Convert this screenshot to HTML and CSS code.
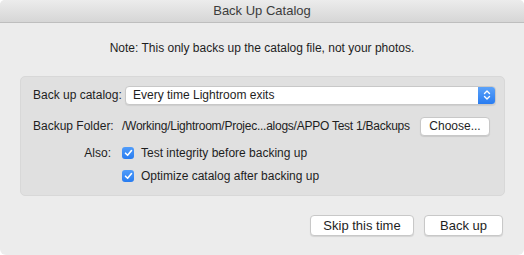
FILE: index.html
```html
<!DOCTYPE html>
<html>
<head>
  <title>Back Up Catalog</title>
  <link rel="stylesheet" href="styles.css">
</head>
<body>

  <div class="window">
    <div class="title-bar">Back Up Catalog</div>

    <p class="note">Note: This only backs up the catalog file, not your photos.</p>

    <div class="group">
      <div class="row row-catalog">
        <span class="label">Back up catalog:</span>
        <div class="popup">
          <span>Every time Lightroom exits</span>
          <span class="stepper">
            <svg width="8" height="12" viewBox="0 0 8 12">
              <path d="M1.5 4.5 L4 2 L6.5 4.5 M1.5 7.5 L4 10 L6.5 7.5" fill="none" stroke="white" stroke-width="1.4" stroke-linecap="round" stroke-linejoin="round"/>
            </svg>
          </span>
        </div>
      </div>

      <div class="row row-folder">
        <span class="label">Backup Folder:</span>
        <span class="path">/Working/Lightroom/Projec...alogs/APPO Test 1/Backups</span>
        <button class="button choose-button">Choose...</button>
      </div>

      <div class="row row-check">
        <span class="label label-right">Also:</span>
        <span class="checkbox">
          <svg width="9" height="8" viewBox="0 0 9 8">
            <path d="M1.5 4.2 L3.6 6.3 L7.5 1.5" fill="none" stroke="white" stroke-width="1.6" stroke-linecap="round" stroke-linejoin="round"/>
          </svg>
        </span>
        <span>Test integrity before backing up</span>
      </div>

      <div class="row row-check">
        <span class="label label-right"></span>
        <span class="checkbox">
          <svg width="9" height="8" viewBox="0 0 9 8">
            <path d="M1.5 4.2 L3.6 6.3 L7.5 1.5" fill="none" stroke="white" stroke-width="1.6" stroke-linecap="round" stroke-linejoin="round"/>
          </svg>
        </span>
        <span>Optimize catalog after backing up</span>
      </div>
    </div>

    <div class="actions">
      <button class="button skip-button">Skip this time</button>
      <button class="button backup-button">Back up</button>
    </div>
  </div>

</body>
</html>
```

FILE: styles.css
```css
body {
  margin: 0;
  background-color: white;
  font-family: "Liberation Sans", Arial, sans-serif;
  font-size: 12px;
  color: rgb(30, 30, 30);
}

.window {
  width: 524px;
  height: 255px;
  background-color: rgb(236, 236, 236);
  border-radius: 5px 5px 6px 6px;
  overflow: hidden;
  display: flex;
  flex-direction: column;
}

.title-bar {
  height: 22px;
  line-height: 22px;
  text-align: center;
  font-size: 13px;
  color: rgb(60, 60, 60);
  background: linear-gradient(rgb(236, 236, 236), rgb(214, 214, 214));
  border-bottom: 1px solid rgb(190, 190, 190);
}

.note {
  margin: 17px 0 0;
  height: 16px;
  line-height: 16px;
  text-align: center;
}

.group {
  margin: 20px 19px 0 20px;
  padding: 8px 0 12px 12px;
  background-color: rgb(224, 224, 224);
  border: 1px solid rgb(216, 216, 216);
  border-radius: 5px;
  display: flex;
  flex-direction: column;
}

.row {
  display: flex;
  align-items: center;
}

.row > * {
  flex-shrink: 0;
}

.row-catalog {
  height: 20px;
}

.row-folder {
  height: 20px;
  margin-top: 11px;
}

.row-check {
  height: 14px;
  margin-top: 10px;
}

.row-check + .row-check {
  margin-top: 9px;
}

.label {
  white-space: nowrap;
}

.row-catalog .label {
  width: 92px;
}

.row-folder .label {
  width: 89px;
}

.label-right {
  width: 78px;
  text-align: right;
  margin-right: 11px;
}

.popup {
  width: 371px;
  height: 19px;
  background-color: white;
  border: 1px solid rgb(200, 200, 200);
  border-radius: 4px;
  box-shadow: 0 1px 1px rgba(0, 0, 0, 0.08);
  display: flex;
  align-items: center;
  justify-content: space-between;
  padding-left: 7px;
  box-sizing: border-box;
  overflow: hidden;
}

.stepper {
  width: 17px;
  height: 19px;
  background: linear-gradient(rgb(94, 164, 250), rgb(38, 122, 240));
  display: flex;
  justify-content: center;
  align-items: center;
}

.path {
  white-space: nowrap;
  letter-spacing: -0.25px;
  width: 298px;
}

.button {
  font-family: inherit;
  font-size: 12px;
  color: rgb(30, 30, 30);
  background-color: white;
  border: 1px solid rgb(200, 200, 200);
  border-radius: 4px;
  box-shadow: 0 1px 1px rgba(0, 0, 0, 0.1);
  padding: 0;
  height: 19px;
}

.choose-button {
  width: 70px;
}

.checkbox {
  width: 12px;
  height: 12px;
  border-radius: 3px;
  background: linear-gradient(rgb(80, 156, 250), rgb(40, 124, 240));
  display: flex;
  justify-content: center;
  align-items: center;
  margin-right: 7px;
}

.actions {
  display: flex;
  justify-content: flex-end;
  gap: 10px;
  margin: 19px 21px 0 0;
}

.actions .button {
  height: 21px;
  font-size: 13px;
}

.skip-button {
  width: 104px;
}

.backup-button {
  width: 79px;
}
```
